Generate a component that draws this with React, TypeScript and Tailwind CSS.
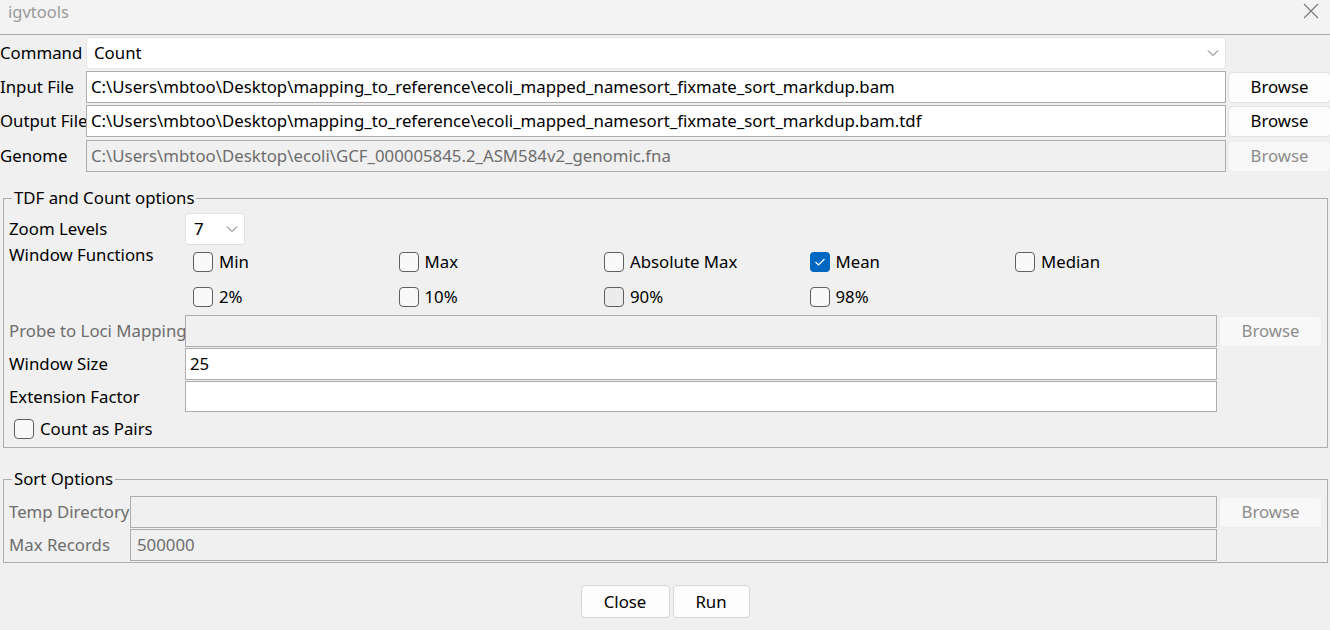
import React from "react";

const font = { fontFamily: '"Noto Sans", "Open Sans", "Liberation Sans", sans-serif' };

function Chevron() {
  return (
    <svg width="12" height="8" viewBox="0 0 12 8" className="shrink-0">
      <path d="M1 1.5 L6 6.5 L11 1.5" fill="none" stroke="#606060" strokeWidth="1" />
    </svg>
  );
}

function Check({ checked = false, hover = false }: { checked?: boolean; hover?: boolean }) {
  if (checked) {
    return (
      <div className="w-[20px] h-[20px] rounded-[4px] bg-[#0067c0] flex items-center justify-center shrink-0">
        <svg width="12" height="10" viewBox="0 0 12 10">
          <path d="M1.5 5 L4.5 8 L10.5 2" fill="none" stroke="#ffffff" strokeWidth="1.2" />
        </svg>
      </div>
    );
  }
  return (
    <div
      className={
        "w-[20px] h-[20px] rounded-[4px] border border-[#5f5f5f] shrink-0 " +
        (hover ? "bg-[#ececec]" : "bg-[#f9f9f9]")
      }
    />
  );
}

function CheckItem({ label, checked, hover }: { label: string; checked?: boolean; hover?: boolean }) {
  return (
    <div className="flex items-center gap-[6px] h-[35px]">
      <Check checked={checked} hover={hover} />
      <span className="text-[16.8px] text-black">{label}</span>
    </div>
  );
}

function Field({ value = "", disabled = false, className = "" }: { value?: string; disabled?: boolean; className?: string }) {
  return (
    <div
      className={
        "h-[32px] border border-[#adadad] flex items-center px-[4px] text-[16.8px] whitespace-nowrap overflow-hidden " +
        (disabled ? "bg-[#f0f0f0] text-[#6d6d6d] " : "bg-white text-black ") +
        className
      }
    >
      {value}
    </div>
  );
}

function BrowseBtn({ disabled = false }: { disabled?: boolean }) {
  return (
    <div
      className={
        "w-[103px] h-[31px] shrink-0 ml-[2px] rounded-[4px] border flex items-center justify-center text-[16.8px] " +
        (disabled ? "bg-[#f8f8f8] border-[#ededed] text-[#8c8c8c]" : "bg-[#fdfdfd] border-[#e2e2e2] text-black")
      }
    >
      Browse
    </div>
  );
}

export default function App() {
  return (
    <div className="w-[1330px] h-[630px] bg-[#f0f0f0] overflow-hidden flex flex-col" style={font}>
      {/* Title bar */}
      <div className="h-[35px] shrink-0 bg-[#f3f3f3] border-b border-[#a8a8a8] flex items-center justify-between pl-[8px] pr-[10px]">
        <span className="text-[16.5px] text-[#9a9a9a] -mt-[10px]">igvtools</span>
        <svg width="18" height="18" viewBox="0 0 18 18" className="-mt-[12px]">
          <path d="M2 2 L16 16 M16 2 L2 16" stroke="#7a7a7a" strokeWidth="1.2" />
        </svg>
      </div>

      {/* Top rows */}
      <div className="flex flex-col pt-[2px] gap-[2px]">
        <div className="flex items-center h-[32px]">
          <span className="w-[86px] shrink-0 text-[16.8px] text-black">Command</span>
          <div className="w-[1140px] h-[32px] bg-white border border-[#e5e5e5] rounded-[3px] flex items-center justify-between pl-[7px] pr-[6px] text-[16.8px] text-black">
            <span>Count</span>
            <Chevron />
          </div>
        </div>
        <div className="flex items-center h-[32px]">
          <span className="w-[86px] shrink-0 text-[16.8px] text-black">Input File</span>
          <Field className="w-[1140px] shrink-0" value="C:\Users\mbtoo\Desktop\mapping_to_reference\ecoli_mapped_namesort_fixmate_sort_markdup.bam" />
          <BrowseBtn />
        </div>
        <div className="flex items-center h-[32px]">
          <span className="w-[86px] shrink-0 text-[16.8px] text-black whitespace-nowrap overflow-hidden">Output File</span>
          <Field className="w-[1140px] shrink-0" value="C:\Users\mbtoo\Desktop\mapping_to_reference\ecoli_mapped_namesort_fixmate_sort_markdup.bam.tdf" />
          <BrowseBtn />
        </div>
        <div className="flex items-center h-[32px] mt-[1px]">
          <span className="w-[86px] shrink-0 text-[16.8px] text-black">Genome</span>
          <Field disabled className="w-[1140px] shrink-0" value="C:\Users\mbtoo\Desktop\ecoli\GCF_000005845.2_ASM584v2_genomic.fna" />
          <BrowseBtn disabled />
        </div>
      </div>

      {/* TDF and Count options */}
      <fieldset className="mx-[3px] mt-[16px] border border-[#adadad] h-[260px] px-[5px] pb-0">
        <legend className="ml-[3px] px-[2px] text-[16.8px] text-black leading-[20px]">TDF and Count options</legend>
        <div className="flex items-center h-[32px] mt-[5px]">
          <span className="w-[176px] shrink-0 text-[16.8px] text-black">Zoom Levels</span>
          <div className="w-[60px] h-[32px] bg-white border border-[#e0e0e0] rounded-[3px] flex items-center justify-between pl-[8px] pr-[6px] text-[16.8px] text-black">
            <span>7</span>
            <Chevron />
          </div>
        </div>
        <div className="flex">
          <span className="w-[184px] shrink-0 text-[16.8px] text-black leading-[22px] -mt-[1px]">Window Functions</span>
          <div className="grid grid-cols-[205.5px_205.5px_205.5px_205.5px_205.5px] -mt-[1px]">
            <CheckItem label="Min" />
            <CheckItem label="Max" />
            <CheckItem label="Absolute Max" />
            <CheckItem label="Mean" checked />
            <CheckItem label="Median" />
            <CheckItem label="2%" />
            <CheckItem label="10%" />
            <CheckItem label="90%" hover />
            <CheckItem label="98%" />
          </div>
        </div>
        <div className="flex flex-col gap-[1px] mt-[1px]">
          <div className="flex items-center h-[32px]">
            <span className="w-[176px] shrink-0 text-[16.8px] text-[#6d6d6d] whitespace-nowrap overflow-hidden">Probe to Loci Mapping</span>
            <Field disabled className="w-[1032px] shrink-0" />
            <BrowseBtn disabled />
          </div>
          <div className="flex items-center h-[32px]">
            <span className="w-[176px] shrink-0 text-[16.8px] text-black">Window Size</span>
            <Field className="w-[1032px] shrink-0" value="25" />
          </div>
          <div className="flex items-center h-[31px]">
            <span className="w-[176px] shrink-0 text-[16.8px] text-black">Extension Factor</span>
            <Field className="w-[1032px] shrink-0 !h-[31px]" />
          </div>
        </div>
        <div className="flex items-center gap-[6px] h-[33px] pl-[5px]">
          <Check />
          <span className="text-[16.8px] text-black">Count as Pairs</span>
        </div>
      </fieldset>

      {/* Sort Options */}
      <fieldset className="mx-[3px] mt-[21px] border border-[#adadad] h-[94px] px-[5px] pb-0">
        <legend className="ml-[3px] px-[2px] text-[16.8px] text-black leading-[20px]">Sort Options</legend>
        <div className="flex flex-col gap-[1px] mt-[7px]">
          <div className="flex items-center h-[32px]">
            <span className="w-[121px] shrink-0 text-[16.8px] text-[#6d6d6d] whitespace-nowrap overflow-hidden">Temp Directory</span>
            <Field disabled className="w-[1087px] shrink-0" />
            <BrowseBtn disabled />
          </div>
          <div className="flex items-center h-[32px]">
            <span className="w-[121px] shrink-0 text-[16.8px] text-[#6d6d6d]">Max Records</span>
            <Field disabled className="w-[1087px] shrink-0 pl-[6px]" value="500000" />
          </div>
        </div>
      </fieldset>

      {/* Buttons */}
      <div className="flex justify-center gap-[3px] mt-[22px]">
        <div className="w-[89px] h-[33px] bg-[#fdfdfd] border border-[#d6d6d6] rounded-[4px] flex items-center justify-center text-[16.8px] text-black">Close</div>
        <div className="w-[77px] h-[33px] bg-[#fdfdfd] border border-[#d6d6d6] rounded-[4px] flex items-center justify-center text-[16.8px] text-black">Run</div>
      </div>
    </div>
  );
}
